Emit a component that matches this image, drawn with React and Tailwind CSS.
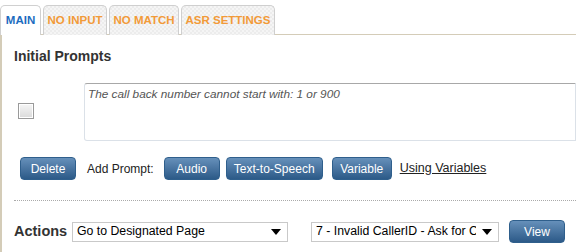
const tabs = [
    { label: 'MAIN', active: true, w: 'w-[41px]' },
    { label: 'NO INPUT', w: 'w-[64px]' },
    { label: 'NO MATCH', w: 'w-[70px]' },
    { label: 'ASR SETTINGS', w: 'w-[94px]' },
];

function BlueButton({ children, className = '' }){
    return (
        <button className={`h-[23px] rounded-[4px] border border-[#2f5f8c] bg-gradient-to-b from-[#6690ba] to-[#2c5a88] text-[12px] text-white ${ className }`}>
            {children}
        </button>
    );
}

function Select({ value, className = '' }){
    return (
        <div className={`flex items-center gap-[6px] h-[20px] border border-[#c9c9c9] bg-white pl-[4px] pr-[6px] text-[12.3px] text-black ${ className }`}>
            <span className="flex-1 whitespace-nowrap overflow-hidden">{value}</span>
            <span className="w-0 h-0 border-l-[5px] border-r-[5px] border-t-[6px] border-l-transparent border-r-transparent border-t-black"></span>
        </div>
    );
}

export default function App(){
    return (
        <div className="w-[576px] h-[252px] overflow-hidden bg-white font-['Liberation_Sans',Arial,sans-serif]">
            <div className="flex gap-[2px] pt-[5px]">
                {tabs.map(t => (
                    <div
                        key={t.label}
                        className={`${ t.w } h-[30px] flex items-center justify-center rounded-t-[5px] border border-b-0 text-[11.5px] font-bold relative z-10 ${ t.active ? 'bg-white border-[#d0d0d0] text-[#1c6cc0]' : 'bg-[repeating-conic-gradient(#ececec_0_25%,#f5f5f5_0_50%)] bg-[length:4px_4px] border-[#cfcfcf] text-[#f29a38] h-[29px]' }`}
                    >
                        {t.label}
                    </div>
                ))}
            </div>
            <div className="-mt-px border-t border-l-2 border-[#d4ccb8] h-full pl-[12px]">
                <h2 className="pt-[11px] text-[14px] font-bold text-[#333]">Initial Prompts</h2>
                <div className="flex items-start mt-[16px]">
                    <div className="mt-[20px] ml-[4px] w-[16px] h-[16px] border border-[#9a9a9a] bg-gradient-to-b from-[#f6f6f6] to-[#dadada] shadow-[inset_0_0_0_1px_#fff]"></div>
                    <div className="ml-[50px] flex-1 h-[58px] rounded-l-[3px] border border-[#dbe1e8] border-t-[#a8a8a8] pl-[3px] pt-[2px] text-[11.8px] italic text-[#555]">
                        The call back number cannot start with: 1 or 900
                    </div>
                </div>
                <div className="flex items-center mt-[16px] ml-[6px] text-[12px] text-[#222]">
                    <BlueButton className="w-[56px]">Delete</BlueButton>
                    <span className="ml-[11px]">Add Prompt:</span>
                    <BlueButton className="ml-[10px] w-[56px]">Audio</BlueButton>
                    <BlueButton className="ml-[6px] w-[97px]">Text-to-Speech</BlueButton>
                    <BlueButton className="ml-[9px] w-[60px]">Variable</BlueButton>
                    <span className="ml-[8px] underline text-[12.5px]">Using Variables</span>
                </div>
                <div className="mt-[20px] border-t border-dotted border-[#aaa]"></div>
                <div className="flex items-center mt-[19px]">
                    <span className="w-[52px] text-[14.5px] font-bold text-[#333]">Actions</span>
                    <Select value="Go to Designated Page" className="ml-[6px] w-[216px]" />
                    <Select value="7 - Invalid CallerID - Ask for Caller" className="ml-[23px] w-[188px]" />
                    <BlueButton className="ml-[10px] w-[56px]">View</BlueButton>
                </div>
            </div>
        </div>
    );
}
